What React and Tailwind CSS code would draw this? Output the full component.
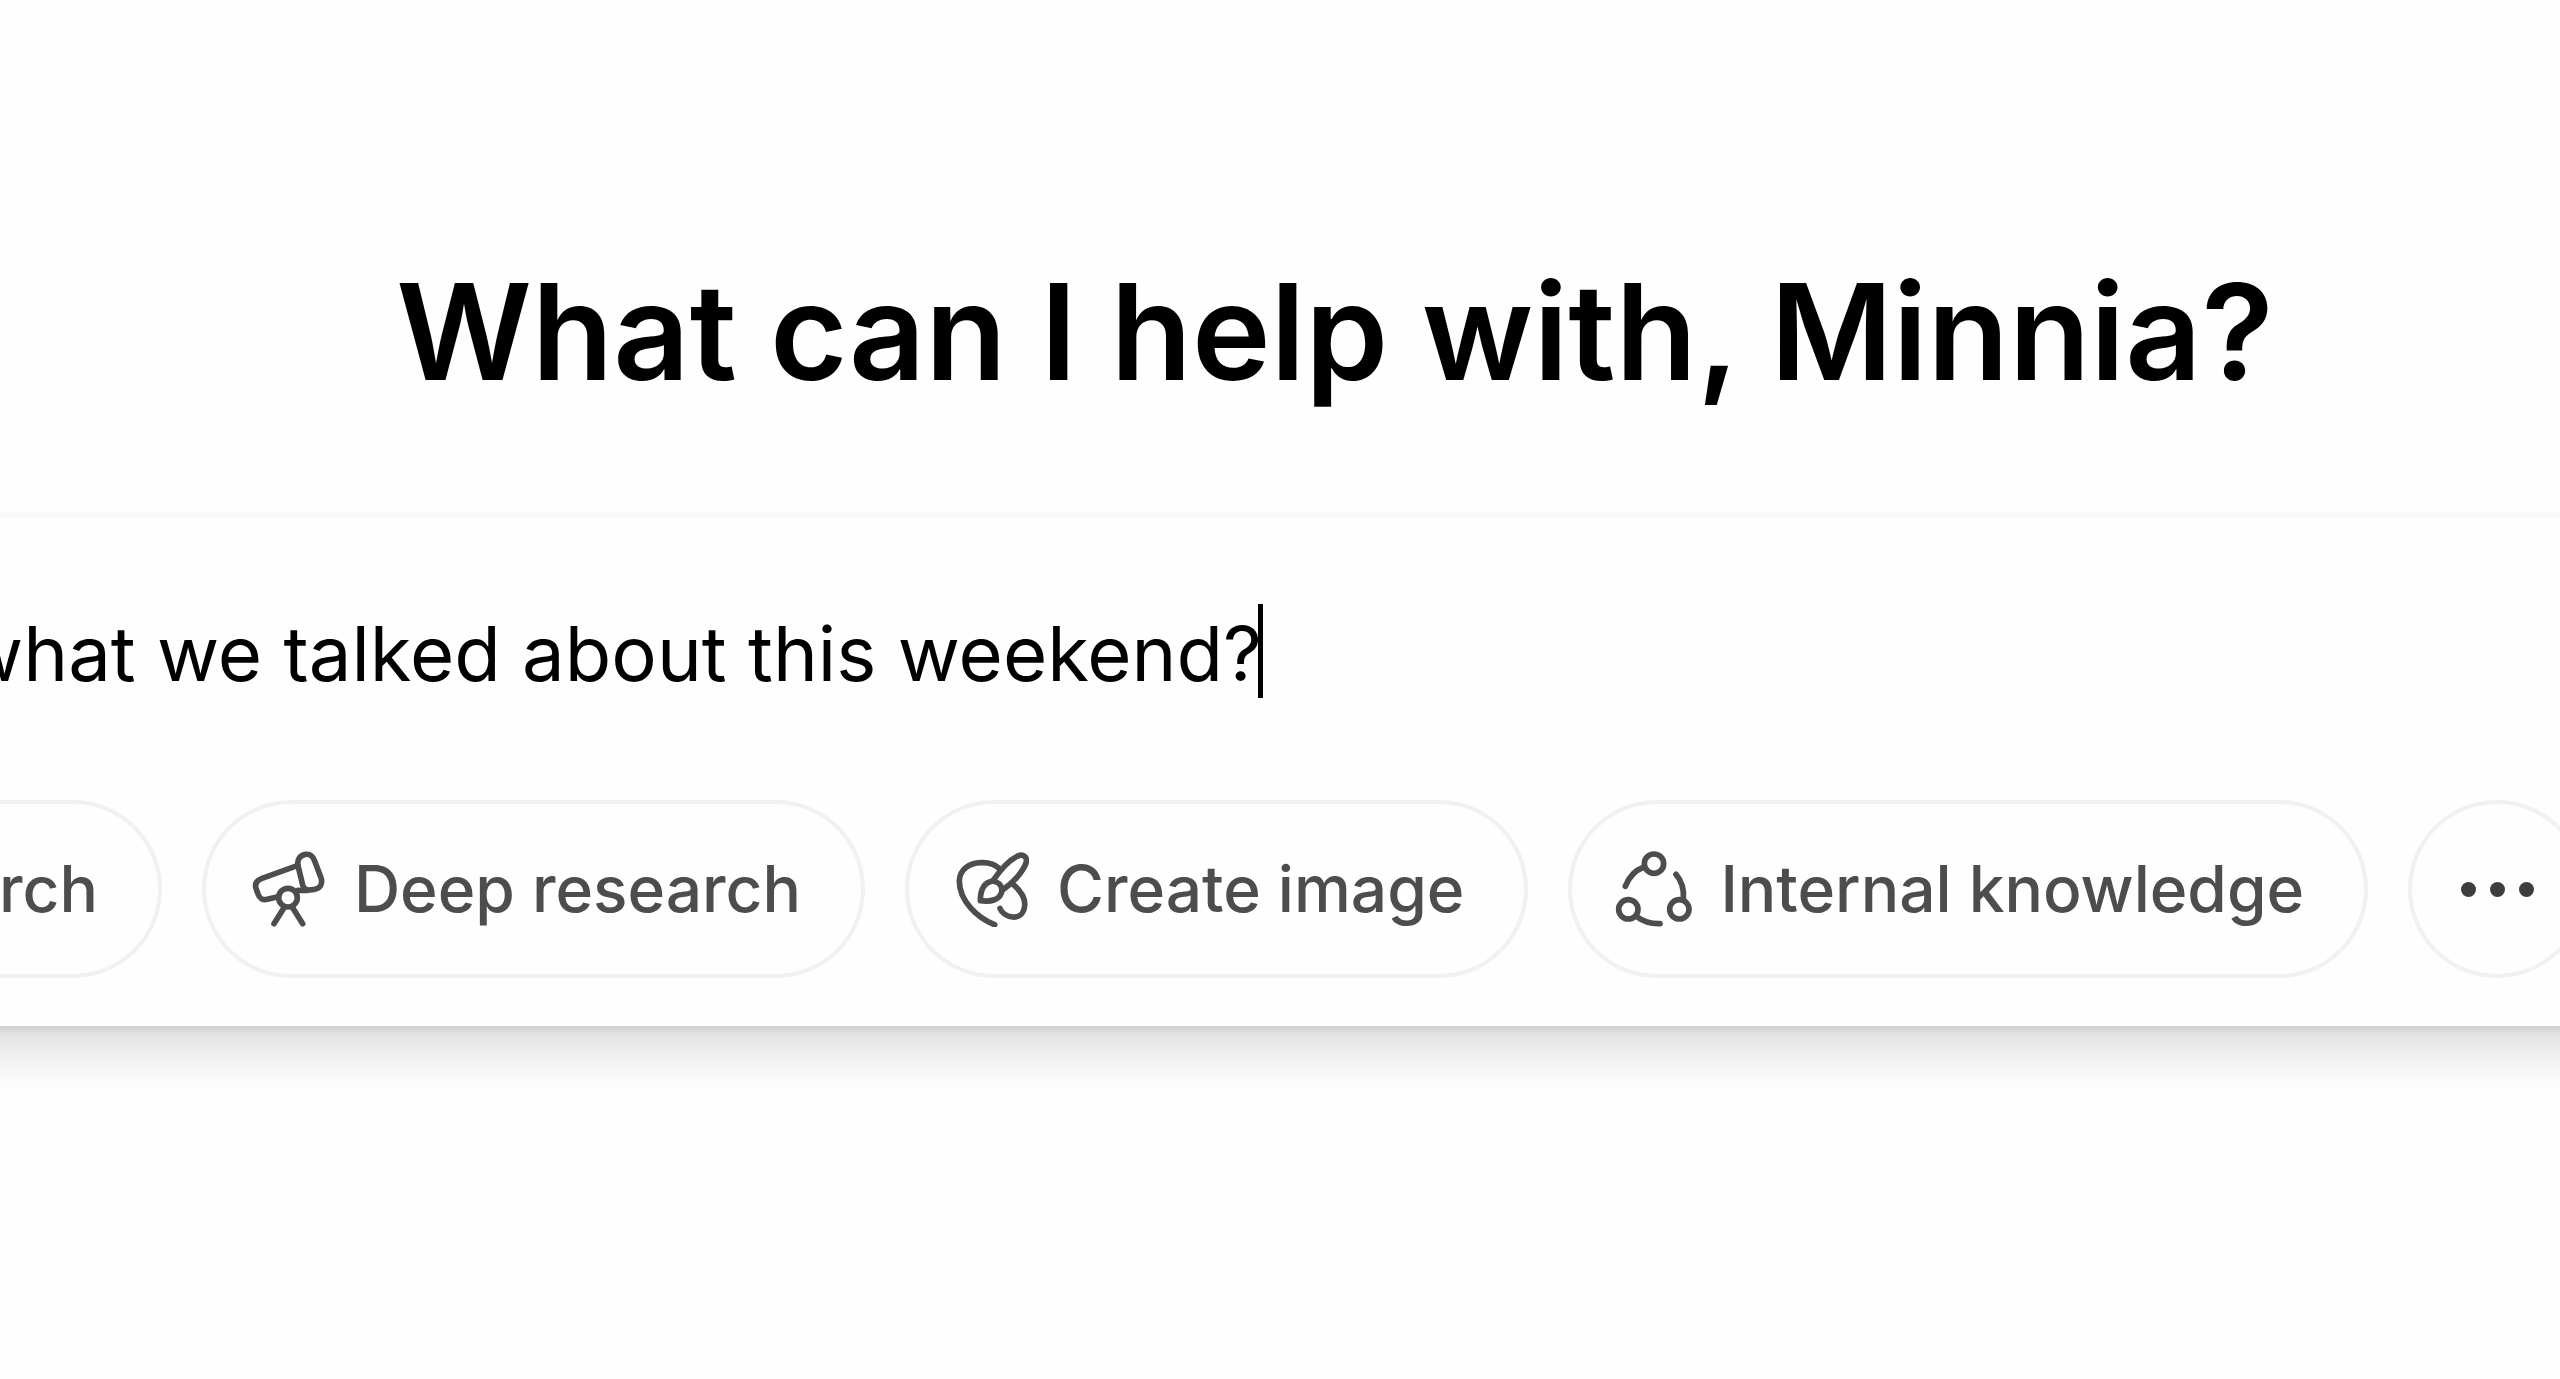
import React, { useState } from 'react';

const iconProps = {
  fill: 'none',
  stroke: 'currentColor',
  strokeWidth: 17,
  strokeLinecap: 'round',
  strokeLinejoin: 'round',
  'aria-hidden': true,
  className: 'size-19 shrink-0',
};

const GlobeIcon = () => (
  <svg viewBox="0 0 228 228" {...iconProps}>
    <circle cx="114" cy="114" r="98" />
    <ellipse cx="114" cy="114" rx="42" ry="98" />
    <path d="M16 114h196" />
  </svg>
);

const TelescopeIcon = () => (
  <svg viewBox="156 150 228 228" {...iconProps}>
    <path d="M300 194C296 174 308 162 323 160C337 158 345 166 350 180L369 230C375 250 366 262 350 265L334 267C323 268 317 262 314 252Z" />
    <path d="M300 193L192 232C176 238 170 248 174 262L180 279C184 292 195 298 208 295L240 287" />
    <path d="M300 268L328 268" />
    <circle cx="270" cy="290" r="28" />
    <path d="M258 320L228 368M284 320L314 368" />
  </svg>
);

const BrushIcon = () => (
  <svg viewBox="156 150 228 228" {...iconProps}>
    <path d="M281 371C230 352 175 300 175 240C176 205 205 186 240 185C262 184 282 190 294 202" />
    <path d="M334 248C360 270 374 290 371 315C368 340 352 350 335 348C318 346 302 336 297 322" />
    <path d="M275 240C290 218 320 180 350 165C368 158 380 168 375 186C366 212 335 247 303 268" />
    <path d="M275 240C252 244 238 262 238 299C268 303 300 298 303 268C302 252 290 242 275 240Z" />
  </svg>
);

const KnowledgeIcon = () => (
  <svg viewBox="174 152 228 228" {...iconProps} overflow="visible">
    <circle cx="288" cy="190" r="29" />
    <circle cx="211" cy="327" r="29" />
    <circle cx="364" cy="327" r="29" />
    <path d="M258 200Q218 215 202 258" />
    <path d="M354 222Q380 252 376 296" />
    <path d="M238 350Q265 371 306 370" />
  </svg>
);

const tools = [
  { label: 'Search', Icon: GlobeIcon },
  { label: 'Deep research', Icon: TelescopeIcon },
  { label: 'Create image', Icon: BrushIcon },
  { label: 'Internal knowledge', Icon: KnowledgeIcon },
];

const ToolButton = ({ label, Icon }) => (
  <button
    type="button"
    className="flex h-[178px] shrink-0 items-center gap-7 rounded-full border-4 border-[#f1f1f1] pr-15 pl-11 text-[64px] leading-[80px] font-medium whitespace-nowrap text-[#4d4d4d]"
  >
    <Icon />
    {label}
  </button>
);

export default function App() {
  const [prompt, setPrompt] = useState('what we talked about this weekend?');

  return (
    <div className="min-h-screen overflow-hidden bg-[#fefefe] font-['Inter',sans-serif]">
      <main className="flex flex-col pt-62">
        <h1 className="pl-[110px] text-center text-[133px] leading-[168px] font-semibold whitespace-nowrap text-black">
          What can I help with, Minnia?
        </h1>

        {/* Composer, wider than the window on both sides */}
        <form
          onSubmit={(e) => e.preventDefault()}
          className="-mr-80 -ml-80 mt-[98px] flex flex-col border-t-4 border-[#f8f8f8] bg-[#fefefe] px-[51px] pb-12 shadow-[0_4px_8px_rgba(0,0,0,0.10),0_32px_40px_rgba(0,0,0,0.11)]"
        >
          <div className="flex h-[282px] items-center pb-4 pl-[230px]">
            <input
              type="text"
              aria-label="Message"
              value={prompt}
              onChange={(e) => setPrompt(e.target.value)}
              className="field-sizing-content pt-1 text-[76px] leading-[96px] text-black caret-transparent outline-none"
            />
            <span className="-ml-1 h-[94px] w-[5px] bg-black" />
          </div>

          <div className="flex items-center gap-10">
            {tools.map((tool) => (
              <ToolButton key={tool.label} {...tool} />
            ))}
            <button
              type="button"
              aria-label="More"
              className="flex size-[178px] shrink-0 items-center justify-center gap-[14px] rounded-full border-4 border-[#f1f1f1]"
            >
              <span className="size-[15px] rounded-full bg-[#3d3d3d]" />
              <span className="size-[15px] rounded-full bg-[#3d3d3d]" />
              <span className="size-[15px] rounded-full bg-[#3d3d3d]" />
            </button>
          </div>
        </form>
      </main>
    </div>
  );
}
